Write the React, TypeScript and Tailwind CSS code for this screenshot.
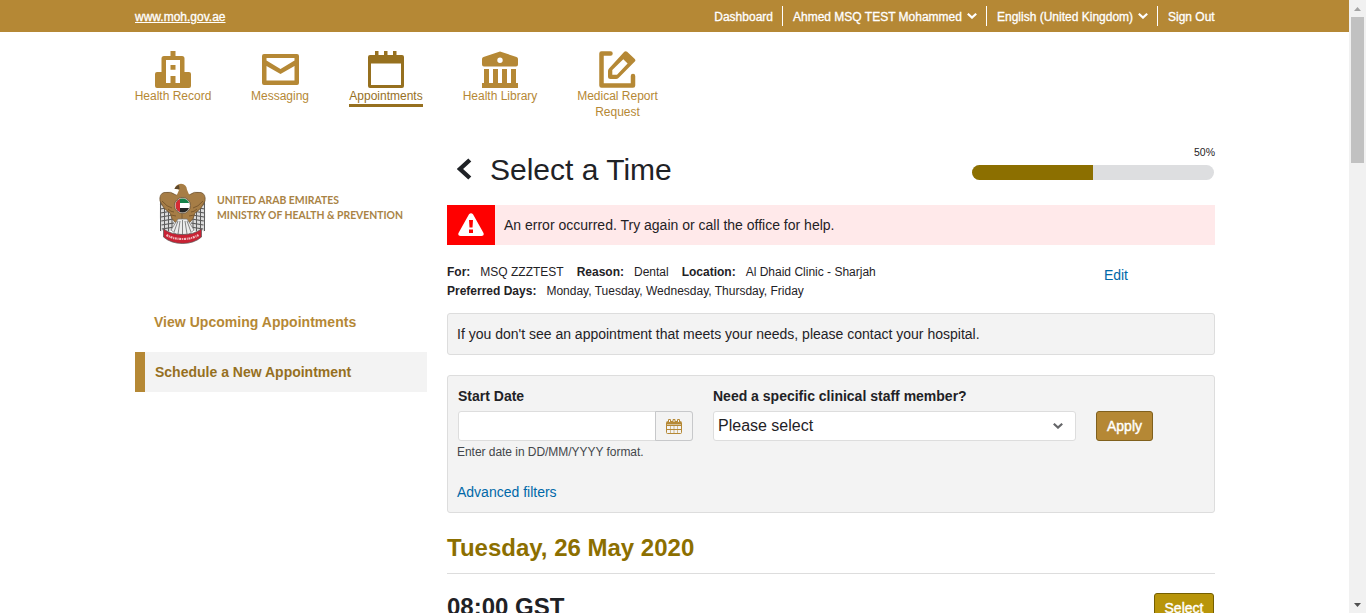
import React from "react";

const Svg = ({ w, h, vb, className = "", children }: { w: number; h: number; vb: string; className?: string; children: React.ReactNode }) => (
  <svg width={w} height={h} viewBox={vb} className={`block shrink-0 ${className}`}>{children}</svg>
);

const HealthRecord = () => (
  <Svg w={36} h={37} vb="0 0 36 37">
    <path fill="currentColor" fillRule="evenodd" d="M15.500 0h5v5H27q2.500 0 2.500 2.500V21H34q2 0 2 2v12q0 2-2 2H2q-2 0-2-2V23q0-2 2-2h4.500V7.500Q6.500 5 9 5h6.500zM11 9v23h4.500v-7h5v7H25V9zM15.500 14h5v4.700h-5z" />
  </Svg>
);
const Mail = () => (
  <Svg w={37} h={37} vb="0 0 37 37">
    <path fill="currentColor" fillRule="evenodd" d="M2 3h33q2 0 2 2v27q0 2-2 2H2q-2 0-2-2V5q0-2 2-2zM4.500 7v2.500l14 8.500 14-8.500V7zM4.500 15v14.500h28V15l-14 8z" />
  </Svg>
);
const Calendar = () => (
  <Svg w={36} h={37} vb="0 0 36 37">
    <path fill="currentColor" fillRule="evenodd" d="M7 0h3.500v4H16V0h3.500v4H25V0h3.500v4H34q2 0 2 2v29q0 2-2 2H2q-2 0-2-2V6q0-2 2-2h5zM3 12.500V34h30V12.500z" />
  </Svg>
);
const Library = () => (
  <Svg w={36} h={37} vb="0 0 36 37">
    <path fill="currentColor" fillRule="evenodd" d="M18 .5 34.500 6Q36 6.600 36 8v5.500q0 2-2 2H2q-2 0-2-2V8q0-1.400 1.500-2zM18 6.500a2.700 2.700 0 1 0 0 5.400 2.700 2.700 0 0 0 0-5.400zM2 18h5v14h4V18h5v14h4V18h5v14h4V18h5v14h2v5H0v-5h2z" />
  </Svg>
);
const Edit = () => (
  <Svg w={37} h={37} vb="0 0 37 37">
    <path d="M11.500 2.500H2.500v32H34V25" fill="none" stroke="currentColor" strokeWidth="4.500" strokeLinecap="round" strokeLinejoin="round" />
    <path fill="currentColor" fillRule="evenodd" d="M25.300.8q1.400-1.200 2.800 0L35.800 8q1.200 1.400 0 2.600L19.500 27q-1 1-2.500 1h-5.500Q9 28 9 25.500V20q0-1.500 1-2.500zM24.300 8.200 13.300 19v4.700H18L28.600 12.500z" />
  </Svg>
);

const navItems = [
  { label: "Health Record", icon: <HealthRecord />, cls: "ml-[135px] w-[76px]" },
  { label: "Messaging", icon: <Mail />, cls: "ml-[40px] w-[58px]" },
  { label: "Appointments", icon: <Calendar />, cls: "ml-[40px] w-[74px] h-[56px] border-b-[3px] border-[#96701f] text-[#96701f]" },
  { label: "Health Library", icon: <Library />, cls: "ml-[40px] w-[74px]" },
  { label: "Medical Report Request", icon: <Edit />, cls: "ml-[40px] w-[81px] !whitespace-normal" },
];

const Chevron = ({ className = "" }: { className?: string }) => (
  <Svg w={10} h={6} vb="0 0 10 6" className={className}>
    <path d="M.8.800 5 4.600 9.200.8" fill="none" stroke="currentColor" strokeWidth="2.200" />
  </Svg>
);

const feathers = [0, 1, 2, 3, 4, 5, 6];
const Wing = () => (
  <g>
    <path d="M1 18 20 20 19 45 9 49Q3 46 2 49 0 34 1 18Z" fill="#dcdcdc" />
    {feathers.map((i) => (
      <path key={i} d={`M${1 + i * 0.3} ${22 + i * 4}L${12 + i * 0.6} ${20 + i * 4}`} stroke="#555" strokeWidth="1.200" />
    ))}
    <path d="M1.500 18V48M5.500 22V48M9.500 28V48M13 33V47" stroke="#5c5c5c" strokeWidth="1" />
    <path d="M1 18Q0 11 5 9.500 12 8 17 12L24 14V40H17Q12 36 11 30 4 26 1 18Z" fill="#a67d46" stroke="#6a5030" strokeWidth=".7" />
    <path d="M3 18Q8 24 13 25M9 26Q12 29 15 29M12 32 17 33" fill="none" stroke="#70502a" strokeWidth=".8" />
  </g>
);
const Emblem = () => (
  <Svg w={47} h={61} vb="0 0 47 61">
    <Wing />
    <g transform="matrix(-1 0 0 1 47 0)"><Wing /></g>
    <path d="M17 14 20 7Q18 5.500 15.500 6 17 1 22 .7q5.500.3 6 6l3 7z" fill="#a77d45" />
    <path d="M15.500 6Q17 2.500 20 2L20.500 6z" fill="#5c472b" />
    <path d="M19 36h9l7 11-6 5H18l-6-5z" fill="#ededed" stroke="#777" strokeWidth=".7" />
    <path d="M19 38 15 49M21 38 19 51M23.500 37V52M26 38 28 51M28 38 32 49" stroke="#777" strokeWidth=".9" />
    <path d="M4.500 46Q12 51.500 23.500 51.500T42.500 46V54Q35 60.500 23.500 60.500T4.500 54Z" fill="#c82234" stroke="#555" strokeWidth=".7" />
    <path d="M7.500 52Q14 56 23.500 56T39.500 52" fill="none" stroke="#f0bec2" strokeWidth="2.200" strokeDasharray="2 .8 1 .7" />
    <clipPath id="disc"><circle cx="23.500" cy="22.500" r="7" /></clipPath>
    <circle cx="23.500" cy="22.500" r="8" fill="#ddd6ca" stroke="#645039" strokeWidth=".8" />
    <g clipPath="url(#disc)">
      <path fill="#16824a" d="M16 15h15v5H16z" /><path fill="#fff" d="M16 20h15v5H16z" /><path fill="#252525" d="M16 25h15v5H16z" /><path fill="#d52c34" d="M16 15h5v15h-5z" />
    </g>
  </Svg>
);

const DateIcon = () => (
  <Svg w={16} h={15} vb="0 0 16 15">
    <path d="M.5 3.500Q.5 2.500 1.500 2.500h13q1 0 1 1v10q0 1-1 1h-13q-1 0-1-1zM.5 6.500h15M.5 10.500h15" fill="none" stroke="#b58835" />
    <path d="M4.500 6v8M8 6v8M11.500 6v8" fill="none" stroke="#b58835" strokeOpacity=".55" />
    <path d="M1 3h14v2.500H1z" fill="#b58835" />
    <path d="M2.500.5h2v3h-2zM7 .5h2v3H7zM11.500.5h2v3h-2z" fill="#f3f3f3" stroke="#b58835" />
  </Svg>
);

export default function App() {
  return (
    <div className="flex h-[613px] w-[1366px] overflow-hidden bg-white font-['Liberation_Sans',Arial,sans-serif] text-[14px] leading-4 whitespace-nowrap text-[#1f2226]">
      <div className="h-full w-[1349px] shrink-0 overflow-hidden">
        <header className="flex h-8 items-center justify-between bg-[#b58835] pr-[134px] pl-[135px] text-[12px] text-white [-webkit-text-stroke:0.3px_white]">
          <a className="mt-px underline">www.moh.gov.ae</a>
          <div className="flex h-5 items-center">
            <span className="mt-px mr-[9px]">Dashboard</span>
            <div className="flex h-5 w-[204px] items-center border-l border-white pl-[10px]"><span className="mt-px">Ahmed MSQ TEST Mohammed</span><Chevron className="mr-[9px] ml-auto" /></div>
            <div className="flex h-5 w-[171px] items-center border-l border-white pl-[10px]"><span className="mt-px">English (United Kingdom)</span><Chevron className="mr-[9px] ml-auto" /></div>
            <div className="flex h-5 w-[58px] items-center border-l border-white pl-[10px]"><span className="mt-px">Sign Out</span></div>
          </div>
        </header>

        <nav className="flex h-[104px] items-start pt-[19px] text-[12px] text-[#b58835]">
          {navItems.map((n) => (
            <a key={n.label} className={`flex shrink-0 flex-col items-center text-center ${n.cls}`}>{n.icon}<span>{n.label}</span></a>
          ))}
        </nav>

        <div className="flex pl-[135px]">
          <aside className="mr-5 w-[292px] shrink-0 pt-[47px] text-[14px] font-bold">
            <div className="flex h-[61px] pl-6">
              <Emblem />
              <svg width="190" height="40" className="mt-[8px] ml-[11px] block" fill="#a98345" fontFamily="Lato" fontWeight="700" fontSize="10.500">
                <text x="0" y="13" textLength="122" lengthAdjust="spacingAndGlyphs">UNITED ARAB EMIRATES</text>
                <text x="0" y="28" textLength="186" lengthAdjust="spacingAndGlyphs">MINISTRY OF HEALTH &amp; PREVENTION</text>
              </svg>
            </div>
            <div className="mt-[58px] flex h-10 items-center pl-[19px] text-[#b58835]"><span className="tracking-[0.03px]">View Upcoming Appointments</span></div>
            <div className="mt-[10px] flex h-10 items-center border-l-[10px] border-[#b58835] bg-[#f3f3f3] pl-[10px] text-[#96701f]"><span>Schedule a New Appointment</span></div>
          </aside>

          <main className="w-[768px] shrink-0">
            <div className="flex h-[69px] justify-between">
              <div className="flex pt-[16px] pl-[10px]">
                <Svg w={15} h={22} vb="0 0 15 22" className="mt-[6px]"><path d="M12.800 2 3 11l9.800 9" fill="none" stroke="currentColor" strokeWidth="4.400" /></Svg>
                <h1 className="ml-[18px] text-[30px] leading-9">Select a Time</h1>
              </div>
              <div className="w-[243px] pt-[10px]">
                <div className="text-right text-[10.500px] leading-3">50%</div>
                <div className="mt-[7px] h-[15px] w-[242px] overflow-hidden rounded-full bg-[#dddee0]"><div className="h-full w-1/2 bg-[#8c6f00]" /></div>
              </div>
            </div>

            <div className="flex h-10 items-center bg-[#ffe9ea]">
              <div className="flex h-10 w-12 items-center justify-center bg-[#ff0000]">
                <Svg w={26} h={23} vb="0 0 26 23" className="-mt-px"><path fill="#fff" fillRule="evenodd" d="M11 1.200Q13-.8 15 1.200L25.500 20q1 3-2 3h-21q-3 0-2-3zM11 7l.5 7.500h3L15 7zM11 16.500v3.500h4v-3.500z" /></Svg>
              </div>
              <span className="ml-[9px]">An error occurred. Try again or call the office for help.</span>
            </div>

            <div className="flex h-[68px] justify-between pt-[18px] text-[12px] leading-[19px]">
              <div>
                <div className="flex"><b>For:</b><span className="ml-[10px]">MSQ ZZZTEST</span><b className="ml-[13px]">Reason:</b><span className="ml-[10px]">Dental</span><b className="ml-[13px]">Location:</b><span className="ml-[10px]">Al Dhaid Clinic - Sharjah</span></div>
                <div className="flex"><b>Preferred Days:</b><span className="ml-[10px]">Monday, Tuesday, Wednesday, Thursday, Friday</span></div>
              </div>
              <a className="mt-[3px] mr-[87px] text-[14px] text-[#0068a8]">Edit</a>
            </div>

            <div className="flex h-[42px] items-center rounded-[3px] border border-[#dddddd] bg-[#f3f3f3] pl-[9px]">If you don't see an appointment that meets your needs, please contact your hospital.</div>

            <section className="mt-5 h-[138px] rounded-[3px] border border-[#dddddd] bg-[#f3f3f3] pt-[12px] pl-[10px]">
              <div className="flex">
                <div className="w-[255px]">
                  <label className="block font-bold">Start Date</label>
                  <div className="mt-[7px] flex h-[30px] w-[235px] rounded-[3px] border border-[#dddddd] bg-white">
                    <div className="flex-1" />
                    <button className="-m-px flex w-[38px] items-center justify-center rounded-r-[3px] border border-[#c7c8ca] bg-[#f3f3f3]"><DateIcon /></button>
                  </div>
                  <p className="mt-[3px] -ml-px text-[12px] tracking-[-0.04px] text-[#43474b]">Enter date in DD/MM/YYYY format.</p>
                </div>
                <div className="w-[363px]">
                  <label className="block font-bold">Need a specific clinical staff member?</label>
                  <div className="mt-[7px] flex h-[30px] items-center justify-between rounded-[3px] border border-[#dddddd] bg-white pr-[12px] pl-1 text-[16px]"><span>Please select</span><Chevron className="text-[#656669]" /></div>
                </div>
                <button className="mt-[23px] ml-5 flex h-[30px] w-[57px] items-center justify-center rounded-[3px] border border-[#80601d] bg-[#b58835] text-white [-webkit-text-stroke:0.4px_white]">Apply</button>
              </div>
              <a className="mt-[24px] -ml-px block text-[#0068a8]">Advanced filters</a>
            </section>

            <h2 className="h-[61px] border-b border-[#dddddd] pt-[21px] text-[24px] leading-7 font-bold text-[#8c6f00]">Tuesday, 26 May 2020</h2>
            <div className="flex h-[60px] justify-between pt-[19px] pr-px">
              <h3 className="text-[24px] leading-7 font-bold">08:00 GST</h3>
              <button className="flex h-[30px] w-[60px] items-center justify-center rounded-[3px] border border-[#755f00] bg-[#b8950a] text-white [-webkit-text-stroke:0.4px_white]">Select</button>
            </div>
          </main>
        </div>
      </div>

      <div className="flex h-full w-[17px] shrink-0 flex-col items-center bg-[#f1f1f1]">
        <Svg w={17} h={17} vb="0 0 17 17"><path d="M5 11 8.500 7 12 11z" fill="#a3a3a3" /></Svg>
        <div className="h-[146px] w-[13px] bg-[#c1c1c1]" />
        <Svg w={17} h={17} vb="0 0 17 17" className="mt-auto"><path d="M5 7h7l-3.500 4z" fill="#505050" /></Svg>
      </div>
    </div>
  );
}
